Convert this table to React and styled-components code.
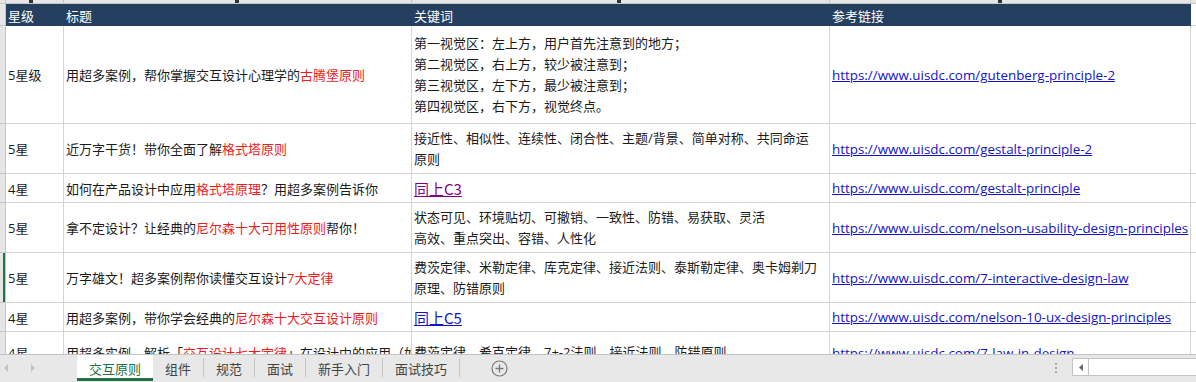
import React from "react";
import styled, { createGlobalStyle, css } from "styled-components";

const COLS = "6px 58px 348px 418px 361px 1fr";

const GlobalStyle = createGlobalStyle`
  html, body { margin: 0; padding: 0; background: #fff; }
  body { font-family: "Open Sans", "Noto Sans CJK SC", sans-serif; }
  * { box-sizing: border-box; }
`;

const Window = styled.div`
  width: 1196px;
  height: 382px;
  overflow: hidden;
  display: flex;
  flex-direction: column;
  background: #fff;
  font-size: 13px;
  color: #1b1b1b;
`;

const ColumnStrip = styled.div`
  display: grid;
  grid-template-columns: ${COLS};
  height: 4px;
  flex: none;
  background: #e6e6e6;
  border-bottom: 1px solid #c6c6c6;
`;

const ColumnHead = styled.div`
  border-right: 1px solid #c6c6c6;
  display: flex;
  justify-content: center;
  align-items: flex-start;
`;

const LetterTail = styled.span`
  width: 4px;
  height: 3px;
  margin-left: ${(p) => p.$shift || 0}px;
  background: #333;
`;

const Sheet = styled.div`
  flex: 1;
  overflow: hidden;
  display: flex;
  flex-direction: column;
`;

const Row = styled.div`
  display: grid;
  grid-template-columns: ${COLS};
  height: ${(p) => p.$h}px;
  flex: none;
`;

const RowHead = styled.div`
  background: #e6e6e6;
  border-right: 1px solid #c6c6c6;
  border-bottom: 1px solid #c6c6c6;
  ${(p) =>
    p.$active &&
    css`
      box-shadow: inset -2px 0 0 #217346;
    `}
`;

const HeadCell = styled.div`
  background: #243f60;
  color: #fff;
  display: flex;
  align-items: center;
  padding-left: 2px;
  white-space: nowrap;
  overflow: hidden;
`;

const Cell = styled.div`
  border-right: 1px solid #d4d4d4;
  border-bottom: 1px solid #d4d4d4;
  display: flex;
  align-items: center;
  padding-left: 2px;
  white-space: nowrap;
  overflow: hidden;
`;

const Blank = styled.div`
  border-bottom: 1px solid #d4d4d4;
`;

const Lines = styled.div`
  display: flex;
  flex-direction: column;
  line-height: 21px;
`;

const Red = styled.span`
  color: #ee1c1c;
`;

const Link = styled.a`
  color: #1212c8;
  text-decoration: underline;
  font-size: 13.4px;
`;

const CellRef = styled.a`
  color: ${(p) => (p.$visited ? "#800080" : "#1212c8")};
  text-decoration: underline;
  font-size: 15px;
  font-family: "Noto Sans CJK SC", sans-serif;
`;

const TabBar = styled.div`
  height: 28px;
  flex: none;
  background: #e8e8e8;
  border-top: 1px solid #c3c3c3;
  display: flex;
  align-items: flex-start;
`;

const NavArrows = styled.div`
  width: 77px;
  height: 26px;
  display: flex;
  align-items: center;
  gap: 21px;
  padding-left: 4px;
`;

const Tab = styled.div`
  height: 26px;
  padding: 0 12px;
  display: flex;
  align-items: center;
  font-family: "Noto Sans CJK SC", sans-serif;
  font-size: 13px;
  color: #444;
  ${(p) =>
    p.$active &&
    css`
      background: #fff;
      color: #217346;
      border-bottom: 3px solid #217346;
      padding-top: 3px;
    `}
`;

const TabSep = styled.div`
  width: 1px;
  height: 19px;
  margin-top: 3px;
  background: #c6c6c6;
`;

const AddSheet = styled.div`
  margin-left: 31px;
  height: 26px;
  display: flex;
  align-items: center;
`;

const Spacer = styled.div`
  flex: 1;
`;

const Grip = styled.div`
  height: 26px;
  display: flex;
  flex-direction: column;
  justify-content: center;
  gap: 2px;
  margin-right: 15px;
  span {
    width: 2px;
    height: 2px;
    background: #a8a8a8;
  }
`;

const HScroll = styled.div`
  width: 124px;
  height: 18px;
  margin-top: 3px;
  background: #fff;
  border: 1px solid #c3c3c3;
  border-right: none;
  display: flex;
`;

const ScrollArrow = styled.div`
  width: 16px;
  border-right: 1px solid #c3c3c3;
  display: flex;
  align-items: center;
  justify-content: center;
`;

const rows = [
  {
    h: 98,
    star: "5星级",
    title: [["用超多案例，帮你掌握交互设计心理学的"], ["古腾堡原则", true]],
    keys: [
      "第一视觉区：左上方，用户首先注意到的地方；",
      "第二视觉区，右上方，较少被注意到；",
      "第三视觉区，左下方，最少被注意到；",
      "第四视觉区，右下方，视觉终点。",
    ],
    link: "https://www.uisdc.com/gutenberg-principle-2",
  },
  {
    h: 50,
    star: "5星",
    title: [["近万字干货！带你全面了解"], ["格式塔原则", true]],
    keys: ["接近性、相似性、连续性、闭合性、主题/背景、简单对称、共同命运", "原则"],
    link: "https://www.uisdc.com/gestalt-principle-2",
  },
  {
    h: 29,
    star: "4星",
    title: [["如何在产品设计中应用"], ["格式塔原理", true], ["？用超多案例告诉你"]],
    ref: { text: "同上C3", visited: true },
    link: "https://www.uisdc.com/gestalt-principle",
  },
  {
    h: 50,
    star: "5星",
    title: [["拿不定设计？让经典的"], ["尼尔森十大可用性原则", true], ["帮你！"]],
    keys: ["状态可见、环境贴切、可撤销、一致性、防错、易获取、灵活", "高效、重点突出、容错、人性化"],
    link: "https://www.uisdc.com/nelson-usability-design-principles",
  },
  {
    h: 50,
    star: "5星",
    active: true,
    title: [["万字雄文！超多案例帮你读懂交互设计"], ["7大定律", true]],
    keys: ["费茨定律、米勒定律、库克定律、接近法则、泰斯勒定律、奥卡姆剃刀", "原理、防错原则"],
    link: "https://www.uisdc.com/7-interactive-design-law",
  },
  {
    h: 29,
    star: "4星",
    title: [["用超多案例，带你学会经典的"], ["尼尔森十大交互设计原则", true]],
    ref: { text: "同上C5", visited: false },
    link: "https://www.uisdc.com/nelson-10-ux-design-principles",
  },
  {
    h: 42,
    star: "4星",
    title: [["用超多实例，解析「"], ["交互设计七大定律", true], ["」在设计中的应用（如何"]],
    keys: ["费茨定律、希克定律、7+-2法则、接近法则、防错原则"],
    link: "https://www.uisdc.com/7-law-in-design",
  },
];

const tabs = ["交互原则", "组件", "规范", "面试", "新手入门", "面试技巧"];

function Title({ parts }) {
  return (
    <span>
      {parts.map(([t, red], i) => (red ? <Red key={i}>{t}</Red> : <span key={i}>{t}</span>))}
    </span>
  );
}

export default function App() {
  return (
    <>
      <GlobalStyle />
      <Window>
        <ColumnStrip>
          <ColumnHead />
          <ColumnHead>
            <LetterTail $shift={-8} />
          </ColumnHead>
          <ColumnHead>
            <LetterTail $shift={-2} />
          </ColumnHead>
          <ColumnHead>
            <LetterTail $shift={-4} />
          </ColumnHead>
          <ColumnHead>
            <LetterTail $shift={-20} />
          </ColumnHead>
          <div />
        </ColumnStrip>
        <Sheet>
          <Row $h={22}>
            <RowHead />
            <HeadCell>星级</HeadCell>
            <HeadCell>标题</HeadCell>
            <HeadCell>关键词</HeadCell>
            <HeadCell>参考链接</HeadCell>
            <Blank />
          </Row>
          {rows.map((r, i) => (
            <Row key={i} $h={r.h}>
              <RowHead $active={r.active} />
              <Cell>{r.star}</Cell>
              <Cell>
                <Title parts={r.title} />
              </Cell>
              <Cell>
                {r.ref ? (
                  <CellRef $visited={r.ref.visited}>{r.ref.text}</CellRef>
                ) : (
                  <Lines>
                    {r.keys.map((k, j) => (
                      <span key={j}>{k}</span>
                    ))}
                  </Lines>
                )}
              </Cell>
              <Cell>
                <Link>{r.link}</Link>
              </Cell>
              <Blank />
            </Row>
          ))}
        </Sheet>
        <TabBar>
          <NavArrows>
            <svg width="5" height="8" viewBox="0 0 5 8">
              <path d="M4 0 L0 4 L4 8 Z" fill="#c4c4c4" />
            </svg>
            <svg width="5" height="8" viewBox="0 0 5 8">
              <path d="M1 0 L5 4 L1 8 Z" fill="#c4c4c4" />
            </svg>
          </NavArrows>
          {tabs.map((t, i) => (
            <React.Fragment key={t}>
              <Tab $active={i === 0}>{t}</Tab>
              {i > 0 && <TabSep />}
            </React.Fragment>
          ))}
          <AddSheet>
            <svg width="17" height="17" viewBox="0 0 17 17">
              <circle cx="8.5" cy="8.5" r="7.5" fill="none" stroke="#7a7a7a" strokeWidth="1.2" />
              <path d="M8.5 4.5 V12.5 M4.5 8.5 H12.5" stroke="#7a7a7a" strokeWidth="1.3" />
            </svg>
          </AddSheet>
          <Spacer />
          <Grip>
            <span />
            <span />
            <span />
          </Grip>
          <HScroll>
            <ScrollArrow>
              <svg width="4" height="7" viewBox="0 0 4 7">
                <path d="M4 0 L0 3.5 L4 7 Z" fill="#666" />
              </svg>
            </ScrollArrow>
          </HScroll>
        </TabBar>
      </Window>
    </>
  );
}
